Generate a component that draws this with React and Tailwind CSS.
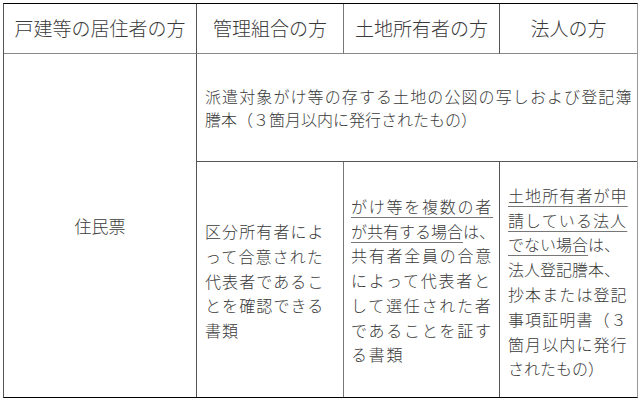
import React from "react";

// 4-column requirements table: header, one spanning row, three detail cells
const HEADERS = [
  { label: "戸建等の居住者の方", line: "border-r-[#555]" },
  { label: "管理組合の方", line: "border-r-[#777]" },
  { label: "土地所有者の方", line: "border-r-[#555]" },
  { label: "法人の方", line: "" },
];

// each line: [underlined part, plain part, tight?]
const KANRI = [
  ["", "区分所有者によ"],
  ["", "って合意された"],
  ["", "代表者であるこ"],
  ["", "とを確認できる"],
  ["", "書類"],
];

const TOCHI = [
  ["がけ等を複数の者", ""],
  ["が共有する場合", "は、", true],
  ["", "共有者全員の合意"],
  ["", "によって代表者と"],
  ["", "して選任された者"],
  ["", "であることを証す"],
  ["", "る書類"],
];

const HOJIN = [
  ["土地所有者が申", ""],
  ["請している法人", ""],
  ["でない場合", "は、", true],
  ["", "法人登記謄本、", true],
  ["", "抄本または登記"],
  ["", "事項証明書（３"],
  ["", "箇月以内に発行"],
  ["", "されたもの）", true],
];

function Lines({ lines, tracking }) {
  return (
    <div className="text-[16px] leading-[24.8px] whitespace-nowrap">
      {lines.map(([u, p, tight], i) => (
        <div key={i} className={tight ? "tracking-normal" : tracking}>
          {u && (
            <span className="underline decoration-[#777] decoration-1 underline-offset-[4px]">{u}</span>
          )}
          {p}
        </div>
      ))}
    </div>
  );
}

export default function App() {
  return (
    <div
      className="w-[640px] h-[400px] bg-white pt-[3px] pl-[3px] text-[#3a3a3a] font-light"
      style={{ fontFamily: '"Noto Sans CJK JP", "Noto Sans", sans-serif' }}
    >
      <div className="inline-grid grid-cols-[193px_147px_156px_137px] grid-rows-[50px_108px_235px] border-t border-t-black border-b border-b-black border-l border-l-[#555] border-r border-r-[#999]">
        {HEADERS.map((h) => (
          <div
            key={h.label}
            className={`flex items-center justify-center text-[19px] border-b border-b-[#888] ${h.line ? `border-r ${h.line}` : ""}`}
          >
            {h.label}
          </div>
        ))}

        <div className="row-span-2 flex items-center justify-center border-r border-r-[#555] text-[17px]">
          住民票
        </div>

        <div className="col-span-3 flex items-center pl-[8px] border-b border-b-[#555] text-[16px] leading-[23px] whitespace-nowrap">
          <div>
            <div className="tracking-[1.1px]">派遣対象がけ等の存する土地の公図の写しおよび登記簿</div>
            <div>謄本（３箇月以内に発行されたもの）</div>
          </div>
        </div>

        <div className="flex items-center pl-[8px] pt-[3px] border-r border-r-[#777]">
          <Lines lines={KANRI} tracking="tracking-[1.1px]" />
        </div>
        <div className="flex items-center pl-[7px] pt-[2px] border-r border-r-[#555]">
          <Lines lines={TOCHI} tracking="tracking-[1.75px]" />
        </div>
        <div className="flex items-center pl-[8px] pt-[5px]">
          <Lines lines={HOJIN} tracking="tracking-[1.1px]" />
        </div>
      </div>
    </div>
  );
}
